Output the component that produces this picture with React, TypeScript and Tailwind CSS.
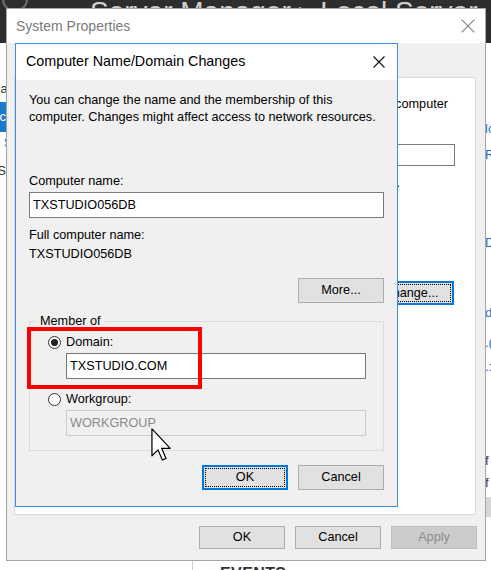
import type { ReactNode } from 'react'
import clsx from 'clsx'

function CloseX({ size, color }: { size: number; color: string }) {
  return (
    <svg width={size} height={size} viewBox="0 0 12 12">
      <path d="M0.5 0.5 L11.5 11.5 M11.5 0.5 L0.5 11.5" stroke={color} strokeWidth="1.1" fill="none" />
    </svg>
  )
}

function WinButton({ children, focused = false, disabled = false, tall = false }: { children: ReactNode; focused?: boolean; disabled?: boolean; tall?: boolean }) {
  if (focused) {
    return (
      <div className={clsx('w-[86px] flex border-2 border-[#0078d7] bg-[#e1e1e1] p-[1px]', tall ? 'h-[25px]' : 'h-[24px]')}>
        <span className="flex-1 flex items-center justify-center border border-dotted border-black">{children}</span>
      </div>
    )
  }
  return (
    <div
      className={clsx(
        'w-[86px] flex items-center justify-center border',
        tall ? 'h-[25px]' : 'h-[23px]',
        disabled ? 'bg-[#cccccc] border-[#bfbfbf] text-[#8c8c8c]' : 'bg-[#e1e1e1] border-[#adadad] text-black'
      )}
    >
      {children}
    </div>
  )
}

function Radio({ checked }: { checked?: boolean }) {
  return (
    <span className="w-[13px] h-[13px] shrink-0 rounded-full border border-[#333] bg-white flex items-center justify-center">
      {checked && <span className="w-[7px] h-[7px] rounded-full bg-[#222]" />}
    </span>
  )
}

function TextBox({ value, disabled = false }: { value: string; disabled?: boolean }) {
  return (
    <div
      className={clsx(
        'h-[26px] flex items-center px-[3px] border',
        disabled ? 'bg-[#f0f0f0] border-[#cccccc] text-[#8a8a8a]' : 'bg-white border-[#7a7a7a] text-black'
      )}
    >
      {value}
    </div>
  )
}

function Cursor() {
  return (
    <svg width="21" height="33" viewBox="0 0 12 19">
      <path d="M0.5 0.5 L0.5 16 L4 12.6 L6.5 18.4 L8.6 17.5 L6.1 11.7 L11 11.7 Z" fill="white" stroke="black" strokeWidth="0.7" strokeLinejoin="round" />
    </svg>
  )
}

export default function App() {
  return (
    <div className="relative w-[491px] h-[570px] overflow-hidden bg-white font-['Liberation_Sans',Arial,sans-serif] text-[12.7px] text-black">
      {/* Server Manager in the background */}
      <div className="flex flex-col h-full">
        <div className="h-[43px] shrink-0 bg-[#2d2d2d] flex items-start gap-[62px] pl-[2px] overflow-hidden">
          <span className="w-[26px] h-[26px] -mt-[14px] rounded-full border-2 border-[#6f6f6f]" />
          <span className="-mt-[5px] text-[28px] leading-[34px] text-[#cfcfcf] whitespace-nowrap">
            Server Manager ▸ Local Server
          </span>
        </div>
        <div className="flex flex-1">
          <div className="w-[193px] shrink-0 border-r border-[#cfcfcf] pt-[33px] text-[13px] overflow-hidden">
            <div className="h-[26px] flex items-center -ml-[9px] text-[#333]">Dashboard</div>
            <div className="h-[30px] flex items-center -ml-[15px] bg-[#1979ca] text-white">Local Server</div>
            <div className="h-[22px] flex items-center -ml-[9px] text-[#1979ca]">|ll Servers</div>
            <div className="h-[34px] flex items-center -ml-[20px] text-[#333]">Ile Services</div>
          </div>
          <div className="flex-1 flex flex-col pl-[292px] pt-[78px] text-[13px] text-[#1a6fc4] whitespace-nowrap leading-[16px]">
            <span>lo</span>
            <span className="mt-[10px]">R</span>
            <span className="mt-[72px]">D</span>
            <span className="mt-[54px]">d</span>
            <span className="mt-[14px]">.(</span>
            <span className="mt-[8px]">.:</span>
            <span className="mt-[78px] text-[#333]">f</span>
            <span className="mt-[6px] text-[#333]">f</span>
            <span className="mt-[6px] h-[20px] bg-[#d6d6d6]" />
          </div>
        </div>
      </div>
      <div className="absolute left-[220px] top-[562px] text-[16px] font-bold text-[#333] tracking-wide">EVENTS</div>

      {/* System Properties window */}
      <div className="absolute left-[6px] top-[8px] w-[480px] h-[553px] border border-[#a5a5a5] bg-[#f0f0f0] flex flex-col">
        <div className="h-[34px] shrink-0 bg-white flex items-center justify-between pl-[9px] pr-[10px]">
          <span className="text-[14px] text-[#7a7a7a]">System Properties</span>
          <CloseX size={14} color="#8a8a8a" />
        </div>
        <div className="mt-[34px] ml-[7px] mr-[9px] h-[438px] bg-white border border-[#d9d9d9] flex flex-col items-end">
          <span className="mt-[17px] mr-[27px] whitespace-nowrap">Windows uses the following information to identify your computer</span>
          <div className="mt-[30px] mr-[20px] w-[300px] h-[22px] border border-[#7a7a7a] bg-white" />
          <span className="mt-[8px] mr-[75px] whitespace-nowrap">For example: "Kitchen Computer" or "Mary's Computer".</span>
          <div className="mt-[88px] mr-[21px]">
            <WinButton focused>Change...</WinButton>
          </div>
        </div>
        <div className="mt-[11px] flex justify-end gap-[10px] pr-[8px]">
          <WinButton>OK</WinButton>
          <WinButton>Cancel</WinButton>
          <WinButton disabled>Apply</WinButton>
        </div>
      </div>

      {/* Computer Name/Domain Changes dialog */}
      <div className="absolute left-[15px] top-[43px] w-[383px] h-[464px] border border-[#3d8ee0] bg-[#f0f0f0] flex flex-col">
        <div className="h-[36px] shrink-0 bg-white flex items-center justify-between pl-[10px] pr-[12px]">
          <span className="text-[14.3px]">Computer Name/Domain Changes</span>
          <CloseX size={12} color="#111" />
        </div>
        <div className="flex flex-col px-[13px] pt-[12px] leading-[17px]">
          <p className="whitespace-nowrap">
            You can change the name and the membership of this
            <br />
            computer. Changes might affect access to network resources.
          </p>
          <span className="mt-[47px]">Computer name:</span>
          <div className="mt-[2px]">
            <TextBox value="TXSTUDIO056DB" />
          </div>
          <span className="mt-[9px]">Full computer name:</span>
          <span className="mt-[2px]">TXSTUDIO056DB</span>
          <div className="mt-[15px] self-end">
            <WinButton tall>More...</WinButton>
          </div>
          <fieldset className="mt-[10px] border border-[#dcdcdc] pb-[14px]">
            <legend className="ml-[6px] px-[4px]">Member of</legend>
            <div className="flex flex-col pl-[18px] pr-[17px]">
              <div className="mt-[4px] flex items-center gap-[5px]">
                <Radio checked />
                <span>Domain:</span>
              </div>
              <div className="mt-[2px] ml-[18px]">
                <TextBox value="TXSTUDIO.COM" />
              </div>
              <div className="mt-[12px] flex items-center gap-[5px]">
                <Radio />
                <span>Workgroup:</span>
              </div>
              <div className="mt-[2px] ml-[18px]">
                <TextBox value="WORKGROUP" disabled />
              </div>
            </div>
          </fieldset>
          <div className="mt-[14px] flex justify-end gap-[10px]">
            <WinButton focused tall>OK</WinButton>
            <WinButton tall>Cancel</WinButton>
          </div>
        </div>
        {/* annotation box */}
        <div className="absolute left-[11px] top-[283px] w-[175px] h-[62px] border-[4px] border-[#ff0000]" />
      </div>

      <div className="absolute left-[151px] top-[428px]">
        <Cursor />
      </div>
    </div>
  )
}
